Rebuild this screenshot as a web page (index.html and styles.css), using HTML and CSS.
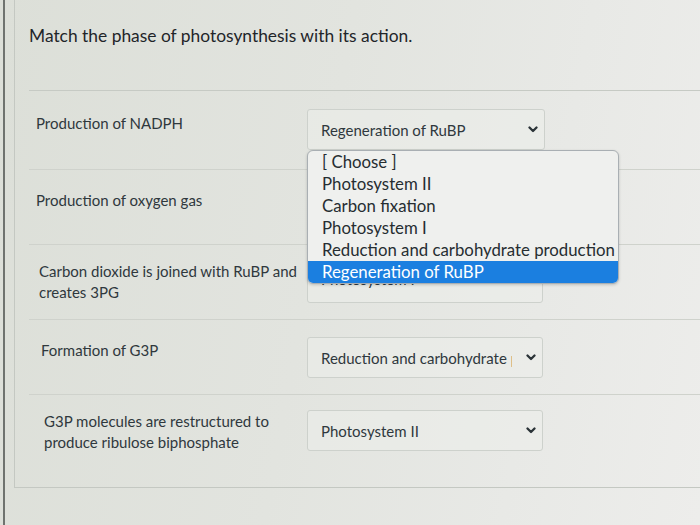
FILE: index.html
```html
<!DOCTYPE html>
<html lang="en">
<head>
<meta charset="utf-8">
<title>Match the phase of photosynthesis</title>
<link rel="stylesheet" href="styles.css">
</head>
<body>
<div class="frame">
  <div class="panel">
    <h1 class="title">Match the phase of photosynthesis with its action.</h1>
    <div class="rows">
      <div class="row row-first">
        <div class="label">Production of NADPH</div>
        <div class="select-wrap">
          <div class="select">
            <span class="value">Regeneration of RuBP</span>
            <svg class="chev" viewBox="0 0 10 7" width="10" height="7"><polyline points="1.5,1.5 5,5 8.5,1.5"/></svg>
          </div>
          <ul class="listbox">
            <li>[ Choose ]</li>
            <li>Photosystem II</li>
            <li>Carbon fixation</li>
            <li>Photosystem I</li>
            <li>Reduction and carbohydrate production</li>
            <li class="active">Regeneration of RuBP</li>
          </ul>
        </div>
      </div>
      <div class="row row-second">
        <div class="label">Production of oxygen gas</div>
        <div class="select-wrap">
          <div class="select">
            <span class="value">Photosystem II</span>
            <svg class="chev" viewBox="0 0 10 7" width="10" height="7"><polyline points="1.5,1.5 5,5 8.5,1.5"/></svg>
          </div>
        </div>
      </div>
      <div class="row row-third">
        <div class="label">Carbon dioxide is joined with RuBP and creates 3PG</div>
        <div class="select-wrap">
          <div class="select tall">
            <span class="value">Photosystem I</span>
            <svg class="chev" viewBox="0 0 10 7" width="10" height="7"><polyline points="1.5,1.5 5,5 8.5,1.5"/></svg>
          </div>
        </div>
      </div>
      <div class="row row-fourth">
        <div class="label">Formation of G3P</div>
        <div class="select-wrap">
          <div class="select">
            <span class="value">Reduction and carbohydrate production</span>
            <svg class="chev" viewBox="0 0 10 7" width="10" height="7"><polyline points="1.5,1.5 5,5 8.5,1.5"/></svg>
          </div>
        </div>
      </div>
      <div class="row row-last">
        <div class="label">G3P molecules are restructured to produce ribulose biphosphate</div>
        <div class="select-wrap">
          <div class="select">
            <span class="value">Photosystem II</span>
            <svg class="chev" viewBox="0 0 10 7" width="10" height="7"><polyline points="1.5,1.5 5,5 8.5,1.5"/></svg>
          </div>
        </div>
      </div>
    </div>
  </div>
</div>
</body>
</html>
```
FILE: styles.css
```css
* { box-sizing: border-box; }

html, body {
  margin: 0;
  height: 100%;
}

body {
  width: 700px;
  height: 525px;
  overflow: hidden;
  font-family: Lato, "Open Sans", "Liberation Sans", sans-serif;
  color: #2f383d;
  background: linear-gradient(100deg, #dcdfd8 0%, #e2e4df 45%, #e8e9e6 75%, #ededeb 100%);
}

.frame {
  margin-left: 3px;
  height: 525px;
  border-left: 2px solid #6f736f;
  padding-left: 9px;
}

.panel {
  height: 488px;
  border-left: 1px solid #c4c8c2;
  border-bottom: 1px solid #c4c8c2;
}

.title {
  margin: 0 0 0 14px;
  padding: 25px 0 0 0;
  height: 91px;
  font-size: 17.4px;
  font-weight: 400;
  line-height: 22px;
  color: #1f2529;
  border-bottom: 1px solid #c6cac4;
}

.rows {
  display: flex;
  flex-direction: column;
  padding-left: 14px;
}

.row {
  display: grid;
  grid-template-columns: 278px 240px;
  height: 75px;
  padding-top: 16px;
  border-bottom: 1px solid #cfd2cc;
}

.row-first {
  height: 79px;
  padding-top: 18px;
}

.row-second .label { padding-top: 4px; }

.row-third { padding-top: 10px; }
.row-third .label { padding-top: 6px; padding-left: 10px; }

.row-fourth { padding-top: 17px; }
.row-fourth .label { padding-top: 3px; padding-left: 12px; }

.row-last {
  height: auto;
  flex: 1;
  border-bottom: none;
  padding-top: 15px;
}
.row-last .label { padding-top: 1px; padding-left: 15px; }

.label {
  padding: 4px 10px 0 7px;
  font-size: 15px;
  line-height: 21px;
  color: #2f383d;
}

.select-wrap {
  position: relative;
  width: 238px;
}

.select {
  display: flex;
  align-items: center;
  height: 41px;
  width: 236px;
  padding: 0 6px 0 13px;
  border: 1px solid #cdd1cc;
  border-radius: 3px;
  background: rgba(238, 239, 236, 0.5);
  font-size: 15px;
  color: #2f383d;
}

.row-first .select { width: 238px; }

.select.tall {
  height: 48px;
}

.value {
  flex: 1;
  overflow: hidden;
  white-space: nowrap;
}

.chev {
  flex: none;
  margin-left: 14px;
  fill: none;
  stroke: #2b3338;
  stroke-width: 2.3;
  stroke-linecap: round;
  stroke-linejoin: round;
}

.listbox {
  position: absolute;
  top: 41px;
  left: 0;
  width: 312px;
  margin: 0;
  padding: 0;
  list-style: none;
  background: #eff0ee;
  border: 1px solid #a9afb3;
  border-radius: 6px;
  box-shadow: 0 1px 3px rgba(0, 0, 0, 0.18);
  overflow: hidden;
  z-index: 2;
}

.listbox li {
  height: 22px;
  line-height: 22px;
  padding-left: 14px;
  font-size: 16.8px;
  color: #262d31;
  white-space: nowrap;
}

.listbox li.active {
  background: #1b7fe0;
  color: #ffffff;
}
```
